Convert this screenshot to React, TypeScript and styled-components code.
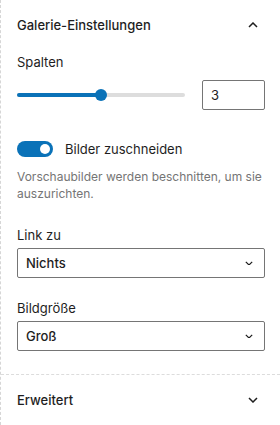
import React from "react";
import styled, { createGlobalStyle } from "styled-components";

const GlobalStyle = createGlobalStyle`
  body {
    margin: 0;
    background: #fff;
    font-family: Inter, "Noto Sans", "Liberation Sans", sans-serif;
    color: #1e1e1e;
  }
`;

const Chevron: React.FC<{ up?: boolean; size?: number }> = ({ up, size = 10 }) => (
  <svg width={size} height={size * 0.6} viewBox="0 0 10 6" fill="none">
    <polyline
      points={up ? "1,5 5,1 9,5" : "1,1 5,5 9,1"}
      stroke="#1e1e1e"
      strokeWidth="1.5"
    />
  </svg>
);

const MIN = 1;
const MAX = 5;

const App: React.FC = () => {
  const [columns, setColumns] = React.useState("3");
  const [crop, setCrop] = React.useState(true);

  const pct = ((Number(columns) - MIN) / (MAX - MIN)) * 100;

  return (
    <>
      <GlobalStyle />
      <Sidebar>
        <Section>
          <Header>
            <Title>Galerie-Einstellungen</Title>
            <Chevron up />
          </Header>
          <Body>
            <Label>Spalten</Label>
            <RangeRow>
              <Track>
                <Fill style={{ width: `${pct}%` }} />
                <Thumb style={{ left: `${pct}%` }} />
              </Track>
              <NumberBox value={columns} onChange={(e) => setColumns(e.target.value)} />
            </RangeRow>

            <ToggleRow>
              <Toggle on={crop} onClick={() => setCrop(!crop)}>
                <Knob on={crop} />
              </Toggle>
              <ToggleText>Bilder zuschneiden</ToggleText>
            </ToggleRow>
            <Help>Vorschaubilder werden beschnitten, um sie auszurichten.</Help>

            <Field>
              <FieldLabel>Link zu</FieldLabel>
              <Select>
                <span>Nichts</span>
                <Chevron size={8} />
              </Select>
            </Field>

            <Field>
              <FieldLabel>Bildgröße</FieldLabel>
              <Select>
                <span>Groß</span>
                <Chevron size={8} />
              </Select>
            </Field>
          </Body>
        </Section>
        <Header>
          <Title>Erweitert</Title>
          <Chevron />
        </Header>
      </Sidebar>
    </>
  );
};

export default App;

const Sidebar = styled.div`
  width: 280px;
  height: 425px;
  box-sizing: border-box;
  border-left: 1px dashed #d6d6d6;
  overflow: hidden;
`;

const Section = styled.div`
  border-bottom: 1px dashed #dcdcdc;
  padding-bottom: 23px;
`;

const Header = styled.div`
  display: flex;
  align-items: center;
  justify-content: space-between;
  height: 50px;
  padding: 0 22px 0 16px;
  cursor: pointer;
`;

const Title = styled.span`
  font-size: 13px;
  font-weight: 500;
`;

const Body = styled.div`
  display: flex;
  flex-direction: column;
  padding: 4px 15px 0 16px;
`;

const Label = styled.div`
  font-size: 13px;
  line-height: 16px;
`;

const RangeRow = styled.div`
  display: flex;
  align-items: center;
  margin-top: 10px;
`;

const Track = styled.div`
  position: relative;
  width: 168px;
  height: 4px;
  border-radius: 2px;
  background: #dddddd;
`;

const Fill = styled.div`
  height: 100%;
  border-radius: 2px;
  background: #0a72b8;
`;

const Thumb = styled.div`
  position: absolute;
  top: 50%;
  width: 12px;
  height: 12px;
  border-radius: 50%;
  background: #0a72b8;
  transform: translate(-50%, -50%);
`;

const NumberBox = styled.input`
  margin-left: auto;
  width: 63px;
  height: 30px;
  box-sizing: border-box;
  border: 1px solid #757575;
  border-radius: 2px;
  padding: 0 8px;
  font: inherit;
  font-size: 13px;
  color: #1e1e1e;
  outline: none;
`;

const ToggleRow = styled.div`
  display: flex;
  align-items: center;
  margin-top: 31px;
`;

const Toggle = styled.div<{ on: boolean }>`
  position: relative;
  width: 36px;
  height: 16px;
  border-radius: 8px;
  background: ${({ on }) => (on ? "#0a72b8" : "#fff")};
  border: ${({ on }) => (on ? "none" : "1px solid #1e1e1e")};
  cursor: pointer;
`;

const Knob = styled.div<{ on: boolean }>`
  position: absolute;
  top: 3px;
  left: ${({ on }) => (on ? "23px" : "3px")};
  width: 10px;
  height: 10px;
  border-radius: 50%;
  background: #fff;
`;

const ToggleText = styled.span`
  margin-left: 12px;
  font-size: 13px;
`;

const Help = styled.p`
  margin: 11px 0 0;
  font-size: 12px;
  line-height: 17px;
  color: #757575;
`;

const Field = styled.div`
  display: flex;
  flex-direction: column;
  margin-top: 25px;
  & + & {
    margin-top: 22px;
  }
`;

const FieldLabel = styled.div`
  font-size: 13px;
  line-height: 16px;
  margin-bottom: 5px;
`;

const Select = styled.div`
  display: flex;
  align-items: center;
  justify-content: space-between;
  height: 30px;
  box-sizing: border-box;
  border: 1px solid #757575;
  border-radius: 2px;
  padding: 0 11px 0 8px;
  font-size: 13px;
  font-weight: 500;
  cursor: pointer;
`;
